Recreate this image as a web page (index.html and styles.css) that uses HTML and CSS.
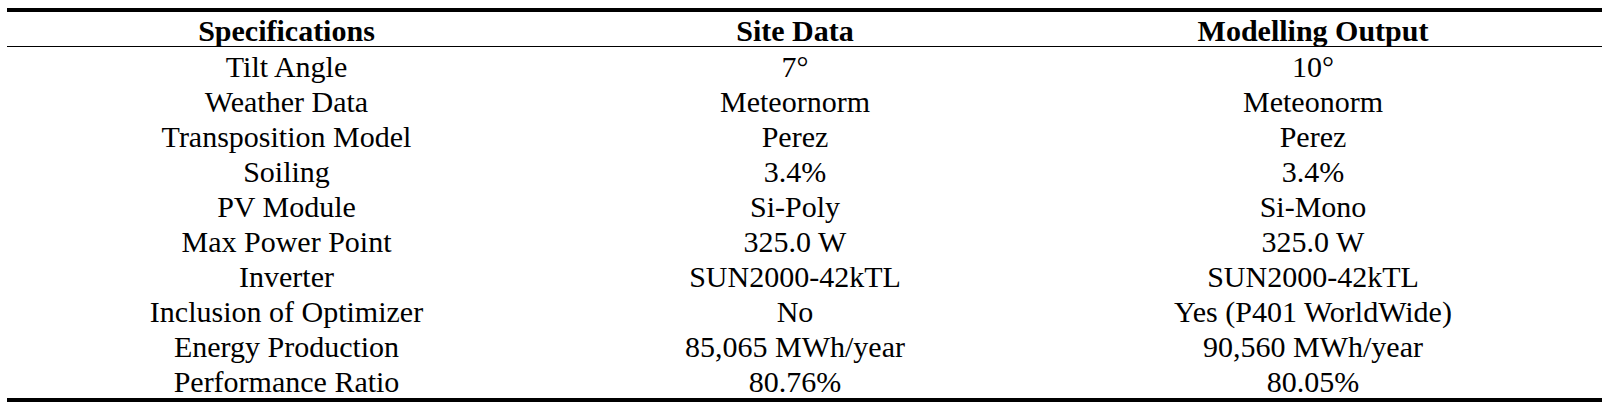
FILE: index.html
```html
<!DOCTYPE html>
<html>

<head>
    <title>Specifications</title>
    <link rel="stylesheet" href="styles.css">
</head>

<body>
    <table class="spec-table">
        <colgroup>
            <col class="col-spec">
            <col class="col-site">
            <col class="col-model">
        </colgroup>
        <thead>
            <tr>
                <th>Specifications</th>
                <th>Site Data</th>
                <th>Modelling Output</th>
            </tr>
        </thead>
        <tbody>
            <tr>
                <td>Tilt Angle</td>
                <td>7°</td>
                <td>10°</td>
            </tr>
            <tr>
                <td>Weather Data</td>
                <td>Meteornorm</td>
                <td>Meteonorm</td>
            </tr>
            <tr>
                <td>Transposition Model</td>
                <td>Perez</td>
                <td>Perez</td>
            </tr>
            <tr>
                <td>Soiling</td>
                <td>3.4%</td>
                <td>3.4%</td>
            </tr>
            <tr>
                <td>PV Module</td>
                <td>Si-Poly</td>
                <td>Si-Mono</td>
            </tr>
            <tr>
                <td>Max Power Point</td>
                <td>325.0 W</td>
                <td>325.0 W</td>
            </tr>
            <tr>
                <td>Inverter</td>
                <td>SUN2000-42kTL</td>
                <td>SUN2000-42kTL</td>
            </tr>
            <tr>
                <td>Inclusion of Optimizer</td>
                <td>No</td>
                <td>Yes (P401 WorldWide)</td>
            </tr>
            <tr>
                <td>Energy Production</td>
                <td>85,065 MWh/year</td>
                <td>90,560 MWh/year</td>
            </tr>
            <tr>
                <td>Performance Ratio</td>
                <td>80.76%</td>
                <td>80.05%</td>
            </tr>
        </tbody>
    </table>
</body>

</html>
```

FILE: styles.css
```css
html,
body {
    margin: 0;
    background: #fff;
}

body {
    padding: 8px 4px 0 7px;
    font-family: "Liberation Serif", "Times New Roman", serif;
    color: #000;
}

/* three-line table, like a paper */
.spec-table {
    width: 1595px;
    border-collapse: separate;
    border-spacing: 0;
    table-layout: fixed;
    border-top: 4px solid #000;
    border-bottom: 4px solid #000;
}

.col-spec {
    width: 559px;
}

.col-site {
    width: 458px;
}

.col-model {
    width: 578px;
}

.spec-table th,
.spec-table td {
    padding: 0;
    text-align: center;
    white-space: nowrap;
}

.spec-table th {
    height: 31px;
    padding-top: 3px;
    font-size: 30px;
    font-weight: bold;
    line-height: 31px;
    border-bottom: 1px solid #000;
}

.spec-table td {
    height: 31.6px;
    padding-top: 3.5px;
    font-size: 30px;
    line-height: 31.6px;
}
```
